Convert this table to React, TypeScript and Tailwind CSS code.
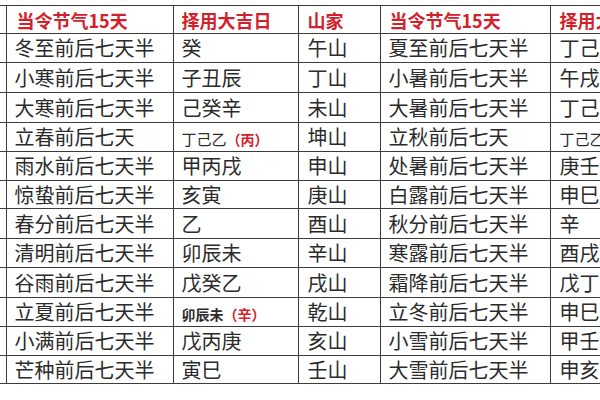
import React from "react";

type Cell = { main: string; small?: string; red?: string; bold?: boolean };

const rows: { h: string; c1: string; c2: Cell; c3: string; c4: string; c5: Cell }[] = [
  { h: "h-[29px]", c1: "冬至前后七天半", c2: { main: "癸" }, c3: "午山", c4: "夏至前后七天半", c5: { main: "丁己庚" } },
  { h: "h-[30px]", c1: "小寒前后七天半", c2: { main: "子丑辰" }, c3: "丁山", c4: "小暑前后七天半", c5: { main: "午戌未" } },
  { h: "h-[30px]", c1: "大寒前后七天半", c2: { main: "己癸辛" }, c3: "未山", c4: "大暑前后七天半", c5: { main: "丁己" } },
  { h: "h-[29px]", c1: "立春前后七天", c2: { main: "", small: "丁己乙", red: "（丙）" }, c3: "坤山", c4: "立秋前后七天", c5: { main: "", small: "丁己乙", red: "（庚）" } },
  { h: "h-[29px]", c1: "雨水前后七天半", c2: { main: "甲丙戌" }, c3: "申山", c4: "处暑前后七天半", c5: { main: "庚壬" } },
  { h: "h-[28px]", c1: "惊蛰前后七天半", c2: { main: "亥寅" }, c3: "庚山", c4: "白露前后七天半", c5: { main: "申巳" } },
  { h: "h-[30px]", c1: "春分前后七天半", c2: { main: "乙" }, c3: "酉山", c4: "秋分前后七天半", c5: { main: "辛" } },
  { h: "h-[29px]", c1: "清明前后七天半", c2: { main: "卯辰未" }, c3: "辛山", c4: "寒露前后七天半", c5: { main: "酉戌丑" } },
  { h: "h-[30px]", c1: "谷雨前后七天半", c2: { main: "戊癸乙" }, c3: "戌山", c4: "霜降前后七天半", c5: { main: "戊丁辛" } },
  { h: "h-[29px]", c1: "立夏前后七天半", c2: { main: "", small: "卯辰未", red: "（辛）", bold: true }, c3: "乾山", c4: "立冬前后七天半", c5: { main: "申巳" } },
  { h: "h-[29px]", c1: "小满前后七天半", c2: { main: "戊丙庚" }, c3: "亥山", c4: "小雪前后七天半", c5: { main: "甲壬" } },
  { h: "h-[28px]", c1: "芒种前后七天半", c2: { main: "寅巳" }, c3: "壬山", c4: "大雪前后七天半", c5: { main: "申亥" } },
];

const td = "border border-[#3c3c3c] align-middle whitespace-nowrap overflow-hidden";
const head = "text-[18px] font-bold text-[#d3212b]";
const body = "text-[20px] text-[#2b2b2b]";

function Pick({ cell }: { cell: Cell }) {
  if (cell.small) {
    return (
      <>
        <span className={cell.bold ? "text-[14px] font-bold text-[#2b2b2b]" : "text-[15px] text-[#2b2b2b]"}>
          {cell.small}
        </span>
        <span className="text-[14px] font-bold text-[#d3212b]">{cell.red}</span>
      </>
    );
  }
  return <span>{cell.main}</span>;
}

export default function App() {
  return (
    <div
      className="w-[600px] h-[400px] overflow-hidden bg-white pt-[5px]"
      style={{ fontFamily: '"Noto Sans CJK SC", "Noto Sans", sans-serif' }}
    >
      <table className="table-fixed border-collapse w-[773px] leading-none">
        <colgroup>
          <col className="w-[6px]" />
          <col className="w-[167px]" />
          <col className="w-[125px]" />
          <col className="w-[82px]" />
          <col className="w-[170px]" />
          <col className="w-[223px]" />
        </colgroup>
        <thead>
          <tr className="h-[28px]">
            <td className={`${td} border-l-0`} />
            <td className={`${td} ${head} pl-[10px]`}>当令节气15天</td>
            <td className={`${td} ${head} pl-[8px]`}>择用大吉日</td>
            <td className={`${td} ${head} pl-[9px]`}>山家</td>
            <td className={`${td} ${head} pl-[9px]`}>当令节气15天</td>
            <td className={`${td} ${head} pl-[9px]`}>择用大吉日</td>
          </tr>
        </thead>
        <tbody>
          {rows.map((r) => (
            <tr key={r.c1} className={r.h}>
              <td className={`${td} border-l-0`} />
              <td className={`${td} ${body} pl-[8px]`}>{r.c1}</td>
              <td className={`${td} ${body} pl-[8px]`}>
                <Pick cell={r.c2} />
              </td>
              <td className={`${td} ${body} pl-[9px]`}>{r.c3}</td>
              <td className={`${td} ${body} pl-[8px]`}>{r.c4}</td>
              <td className={`${td} ${body} pl-[9px]`}>
                <Pick cell={r.c5} />
              </td>
            </tr>
          ))}
        </tbody>
      </table>
    </div>
  );
}
